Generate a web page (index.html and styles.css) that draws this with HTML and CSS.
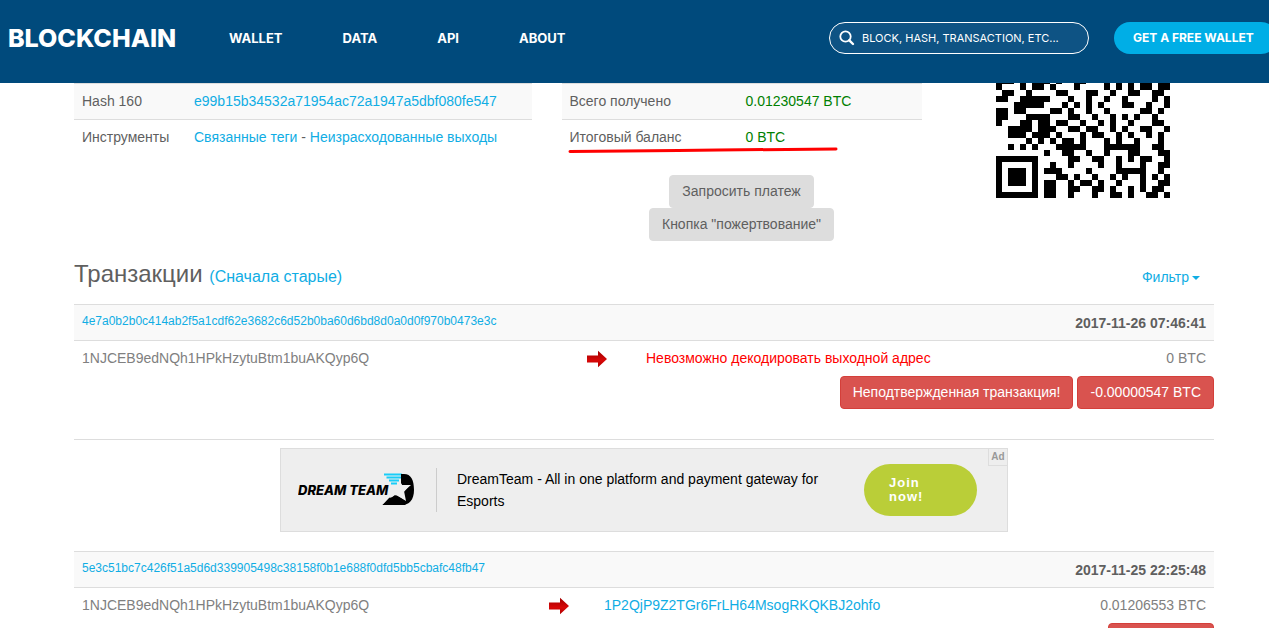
FILE: index.html
```html
<!DOCTYPE html>
<html lang="ru">
<head>
<meta charset="utf-8">
<title>Blockchain</title>
<link rel="stylesheet" href="styles.css">
</head>
<body>
<header class="topbar">
  <a class="brand" href="#">BLOCKCHAIN</a>
  <nav class="nav">
    <a href="#">WALLET</a>
    <a href="#">DATA</a>
    <a href="#">API</a>
    <a href="#">ABOUT</a>
  </nav>
  <form class="search">
    <svg class="search-icon" width="16" height="16" viewBox="0 0 16 16" aria-hidden="true"><circle cx="6.5" cy="6.5" r="5.2" fill="none" stroke="#fff" stroke-width="1.8"/><path d="M10.3 10.3 14 14" stroke="#fff" stroke-width="2.4" stroke-linecap="round"/></svg>
    <input type="text" aria-label="Search" placeholder="BLOCK, HASH, TRANSACTION, ETC...">
  </form>
  <a class="get-wallet" href="#">GET A FREE WALLET</a>
</header>
<main class="container">
  <section class="summary">
    <div class="details">
      <table class="info">
        <tr><th scope="row">Hash 160</th><td><a href="#">e99b15b34532a71954ac72a1947a5dbf080fe547</a></td></tr>
        <tr><th scope="row">Инструменты</th><td><a href="#">Связанные теги</a> - <a href="#">Неизрасходованные выходы</a></td></tr>
      </table>
    </div>
    <div class="totals">
      <table class="info info-totals">
        <tr><th scope="row">Всего получено</th><td class="green">0.01230547 BTC</td></tr>
        <tr><th scope="row">Итоговый баланс</th><td class="green">0 BTC</td></tr>
      </table>
      <svg class="mark" width="270" height="6" viewBox="0 0 270 6" aria-hidden="true"><path d="M2 4.5 110 3.500 150 3 268 2" fill="none" stroke="#f00" stroke-width="3" stroke-linecap="round"/></svg>
      <div class="actions">
        <button class="btn" type="button">Запросить платеж</button>
        <button class="btn" type="button">Кнопка "пожертвование"</button>
      </div>
    </div>
    <div class="qr">
      <svg id="qr" width="174" height="115" viewBox="0 0 174 115" role="img" aria-label="QR" shape-rendering="crispEdges"></svg>
    </div>
  </section>

  <div class="list-head">
    <h2>Транзакции <a href="#">(Сначала старые)</a></h2>
    <a class="filter" href="#">Фильтр<span class="caret"></span></a>
  </div>

  <article class="tx">
    <table class="tx-table">
      <colgroup><col class="from-wide"><col class="arrow-col"><col><col class="amount-col"></colgroup>
      <tr class="tx-head"><th colspan="3"><a href="#">4e7a0b2b0c414ab2f5a1cdf62e3682c6d52b0ba60d6bd8d0a0d0f970b0473e3c</a></th><th class="right">2017-11-26 07:46:41</th></tr>
      <tr><td>1NJCEB9edNQh1HPkHzytuBtm1buAKQyp6Q</td>
        <td class="arrow"><svg width="20" height="18" viewBox="0 0 20 18" aria-hidden="true"><defs><linearGradient id="red" x1="0" y1="0" x2="0" y2="1"><stop offset="0" stop-color="#a00000"/><stop offset=".6" stop-color="#d80808"/><stop offset="1" stop-color="#b00000"/></linearGradient></defs><path d="M0 5.500H11V0.800L20 9 11 17.200V12.500H0Z" fill="url(#red)"/></svg></td>
        <td class="error">Невозможно декодировать выходной адрес</td><td class="right">0 BTC</td></tr>
    </table>
    <div class="tx-foot">
      <button class="btn danger" type="button">Неподтвержденная транзакция!</button>
      <button class="btn danger" type="button">-0.00000547 BTC</button>
    </div>
  </article>

  <aside class="ad">
    <svg class="ad-logo" width="118" height="34" viewBox="0 0 118 34" role="img" aria-label="DreamTeam">
      <text class="ad-name" x="0" y="22">DREAM TEAM</text>
      <path d="M86 1.500H104M88.500 4.500H103M91 7.500H101M93 10.500H99" stroke="#19cdf8" stroke-width="2"/>
      <path fill-rule="evenodd" d="M103 1H106C113 1 116 7 116 17S111 32 104 32H84.500L91 25 97 21.500 107 27 105 20 112 12H104L103 11Z"/>
      <path d="M94 12H100L102 8 104 12H113L106 18 108 28 99 22 92 25 95 18Z" fill="#eee"/>
      <path d="M84.500 32 97 22 108 32Z"/>
    </svg>
    <p class="ad-text">DreamTeam - All in one platform and payment gateway for Esports</p>
    <a class="ad-join" href="#">Join<br>now!</a>
    <span class="ad-label">Ad</span>
  </aside>

  <article class="tx">
    <table class="tx-table">
      <colgroup><col class="from-narrow"><col class="arrow-col-narrow"><col><col class="amount-col"></colgroup>
      <tr class="tx-head"><th colspan="3"><a href="#">5e3c51bc7c426f51a5d6d339905498c38158f0b1e688f0dfd5bb5cbafc48fb47</a></th><th class="right">2017-11-25 22:25:48</th></tr>
      <tr><td>1NJCEB9edNQh1HPkHzytuBtm1buAKQyp6Q</td>
        <td class="arrow"><svg width="20" height="18" viewBox="0 0 20 18" aria-hidden="true"><path d="M0 5.500H11V0.800L20 9 11 17.200V12.500H0Z" fill="url(#red)"/></svg></td>
        <td><a href="#">1P2QjP9Z2TGr6FrLH64MsogRKQKBJ2ohfo</a></td><td class="right">0.01206553 BTC</td></tr>
    </table>
    <div class="tx-foot"><button class="btn danger" type="button" aria-label="BTC"></button></div>
  </article>
</main>
<script src="qr.js"></script>
</body>
</html>
```

FILE: styles.css
```css
* { box-sizing: border-box; }
body { margin: 0; height: 100vh; overflow: hidden; background: #fff; color: #5f5f5f; font: 14px/20px "Liberation Sans", Arial, sans-serif; }
a { color: #10ade4; text-decoration: none; }

.topbar { display: flex; align-items: center; height: 83px; padding: 0 0 7px 8px; background: #004a7c; font-family: Inter, "Open Sans", sans-serif; }
.topbar a { color: #fff; white-space: nowrap; }
.brand { width: 172px; font-size: 25px; line-height: 32px; font-weight: 800; }
.nav { display: flex; gap: 60px; margin-left: 49px; font-size: 13px; font-weight: 700; }
.search { display: flex; align-items: center; gap: 7px; width: 260px; height: 32px; margin-left: auto; padding: 0 9px; border: 1px solid #fff; border-radius: 16px; background: #0e5384; }
.search-icon { flex: none; }
.search input { flex: 1; min-width: 0; padding: 0; border: 0; outline: 0; background: none; color: #fff; font: 11px/20px Inter, "Open Sans", sans-serif; }
.search input::placeholder { color: #fff; opacity: 1; }
.topbar .get-wallet { width: 163px; margin: 0 -8px 0 25px; padding: 6px 19px; border-radius: 16px; background: #00aee6; font-size: 12px; font-weight: 700; }

.container { padding: 0 55px 0 74px; }
.summary { display: grid; grid-template-columns: repeat(12, minmax(0, 1fr)); column-gap: 30px; }
.details { grid-column: span 5; }
.totals { grid-column: span 4; position: relative; }
.qr { grid-column: span 3; text-align: center; }
.qr svg { display: inline-block; vertical-align: top; }

table { width: 100%; border-collapse: separate; border-spacing: 0; }
th, td { padding: 0 8px 2px; height: 36px; border-top: 1px solid #ddd; text-align: left; font-weight: 400; white-space: nowrap; }
.info th { width: 112px; }
.info-totals th { width: 176px; }
.info tr:first-child > * { background: #f9f9f9; }
.green { color: #008000; }
.mark { position: absolute; left: 6px; top: 64px; }

.btn { height: 33px; padding: 0 12px 2px; border: 1px solid #ddd; border-radius: 4px; background: #ddd; color: #5f5f5f; font: inherit; }
.actions { display: flex; flex-direction: column; align-items: center; padding-top: 20px; }

.list-head { display: flex; justify-content: space-between; align-items: center; height: 63px; padding: 6px 14px 0 0; }
h2 { margin: 0; font-size: 24px; line-height: 32px; font-weight: 400; }
h2 a { font-size: 16px; }
.filter { padding-top: 2px; }
.caret { display: inline-block; margin-left: 3px; border: 4px solid transparent; border-top-color: currentColor; border-bottom: 0; vertical-align: middle; }

.tx-table { table-layout: fixed; color: #808080; }
.tx-head th { background: #f9f9f9; }
.tx-head th:first-child { padding-bottom: 4px; }
.tx-head a { font-size: 12px; }
.tx-head .right { padding-bottom: 0; color: #5f5f5f; font-weight: 700; }
.right { text-align: right; }
.error { color: #f00; }
.from-wide { width: 45%; }
.arrow-col { width: 51px; }
.from-narrow { width: 475px; }
.arrow-col-narrow { width: 47px; }
.amount-col { width: 170px; }
.arrow { padding: 0; }
.arrow svg { display: block; }
.tx-foot { display: flex; justify-content: flex-end; gap: 4px; }
.danger { min-width: 106px; border-color: #d43f3a; background: #d9534f; color: #fff; }

.ad { position: relative; display: flex; align-items: center; width: 728px; height: 84px; margin: 39px auto 19px; padding: 0 30px 0 17px; border: 1px solid #ddd; background: #eee; }
.ad::before { content: ""; position: absolute; left: -207px; right: -207px; top: -10px; border-top: 1px solid #ddd; }
.ad-logo { flex: none; }
.ad-name { font: italic 800 13px Inter, sans-serif; fill: #000; }
.ad-text { width: 407px; margin: 0 0 0 20px; padding-left: 20px; border-left: 1px solid #ccc; color: #000; line-height: 22px; }
.ad-join { width: 113px; height: 52px; margin-left: auto; padding: 12px 25px; border-radius: 26px; background: #bace38; color: #fff; font-size: 13px; line-height: 14px; font-weight: 700; letter-spacing: 1px; }
.ad-label { position: absolute; top: 0; right: 0; width: 19px; height: 17px; border: solid #ddd; border-width: 0 0 1px 1px; color: #999; font-size: 10px; line-height: 16px; font-weight: 700; text-align: center; }
```

FILE: qr.js
```js
// Visible rows of the address code, one character per module.
const rows = [
  "11101011101001100010101011011",
  "10001011010001000010101011011",
  "01100100001100011001001100110",
  "11001111100010010010010000101",
  "00011111000101010100011001001",
  "11011000011010010010000011010",
  "11000111100011001001010100100",
  "10001101101100100101001000110",
  "00111101110011011001010011001",
  "00111011101000101100101001010",
  "00000101010110100010100100010",
  "00101010001111100011111100110",
  "00000000100110010010001100011",
  "11111110000011001100101011001",
  "10000010010010000100100010011",
  "10111010111000010000111110010",
  "10111010001101001001010010101",
  "10111010110010110100100010011",
  "10000010110011001101001010110",
  "11111110110010001001101001101"
];
const size = 6;
const top0 = 115 - rows.length * size;
let d = "";
rows.forEach((row, r) => {
  [...row].forEach((bit, c) => {
    if (bit === "1") d += `M${c * size} ${top0 + r * size}h${size}v${size}h-${size}z`;
  });
});
const path = document.createElementNS("http://www.w3.org/2000/svg", "path");
path.setAttribute("d", d);
document.getElementById("qr").appendChild(path);
```
